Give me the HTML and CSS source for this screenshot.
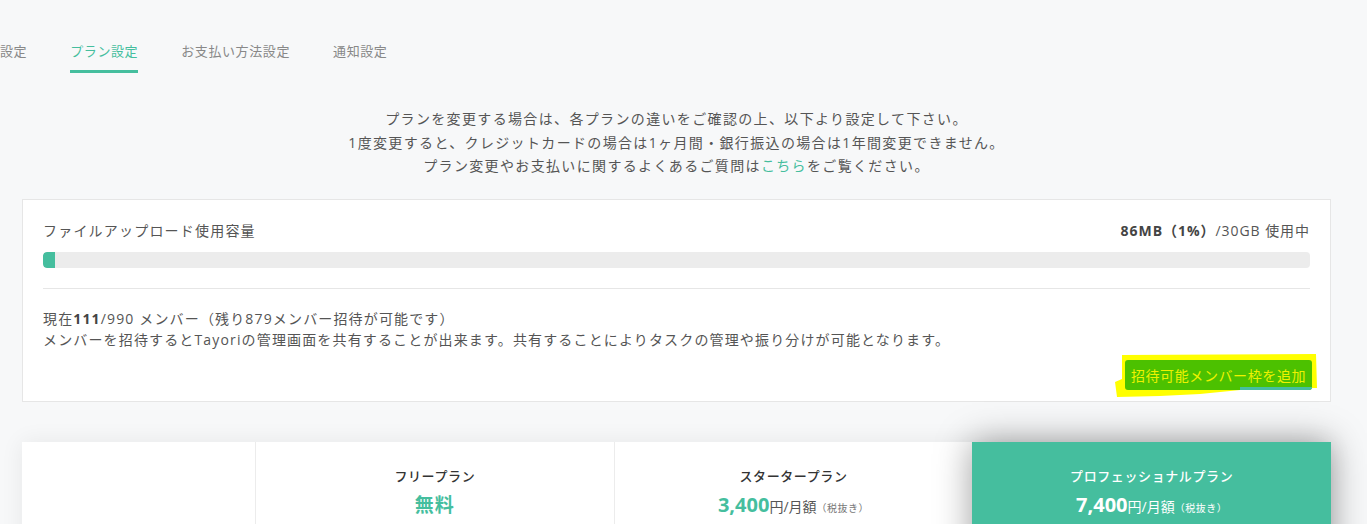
FILE: index.html
```html
<!DOCTYPE html>
<html lang="ja">
<head>
<meta charset="utf-8">
<title>プラン設定</title>
<link rel="stylesheet" href="styles.css">
</head>
<body>
<nav class="tabs">
  <a class="tab">設定</a>
  <a class="tab active">プラン設定</a>
  <a class="tab">お支払い方法設定</a>
  <a class="tab">通知設定</a>
</nav>
<main class="content">
  <p class="intro">プランを変更する場合は、各プランの違いをご確認の上、以下より設定して下さい。<br>1度変更すると、クレジットカードの場合は1ヶ月間・銀行振込の場合は1年間変更できません。<br>プラン変更やお支払いに関するよくあるご質問は<a class="link">こちら</a>をご覧ください。</p>

  <section class="card">
    <div class="usage-head">
      <span>ファイルアップロード使用容量</span>
      <span class="usage-value"><b>86MB（1%）</b>/30GB 使用中</span>
    </div>
    <div class="bar"><div class="fill" style="width:12px"></div></div>
    <div class="divider"></div>
    <p class="members">現在<b>111</b>/990 メンバー（残り879メンバー招待が可能です）<br>メンバーを招待するとTayoriの管理画面を共有することが出来ます。共有することによりタスクの管理や振り分けが可能となります。</p>
    <div class="actions">
      <span class="btn-wrap">
        <svg class="marker" width="204" height="48" viewBox="0 0 204 48"><polygon points="7,3 201,2 202,36 197,36 125,38 85,42 45,44 2,45 0,30 7,27" fill="#ffff00"/></svg>
        <button class="btn">招待可能メンバー枠を追加</button>
      </span>
    </div>
  </section>

  <section class="plans">
    <div class="plan-cell"></div>
    <div class="plan-cell">
      <div class="plan-name">フリープラン</div>
      <div class="price"><strong class="free">無料</strong></div>
    </div>
    <div class="plan-cell">
      <div class="plan-name">スタータープラン</div>
      <div class="price"><strong>3,400</strong>円/月額<small>（税抜き）</small></div>
    </div>
    <div class="plan-cell featured">
      <div class="plan-name">プロフェッショナルプラン</div>
      <div class="price"><strong>7,400</strong>円/月額<small>（税抜き）</small></div>
    </div>
  </section>
</main>
</body>
</html>
```

FILE: styles.css
```css
* { box-sizing: border-box; }
html, body { margin: 0; padding: 0; }
body {
  background: #f7f8f9;
  font-family: "Open Sans", "Noto Sans CJK JP", sans-serif;
  color: #555;
  font-size: 14px;
  overflow: hidden;
}
.tabs {
  display: flex;
  gap: 43px;
  height: 73px;
}
.tab {
  font-size: 13px;
  line-height: 20px;
  letter-spacing: 0.6px;
  color: #888;
  padding-top: 41px;
  padding-bottom: 9px;
  border-bottom: 3px solid transparent;
  cursor: pointer;
}
.tab.active {
  color: #45be9e;
  border-bottom-color: #45be9e;
}
.content {
  padding: 0 36px 0 22px;
}
.intro {
  margin: 34px 0 21px;
  text-align: center;
  font-size: 14px;
  line-height: 23.5px;
  letter-spacing: 1.35px;
  color: #555;
}
.link { color: #45be9e; cursor: pointer; }
.card {
  background: #fff;
  border: 1px solid #e6e6e6;
  padding: 21px 20px 11px;
}
.usage-head {
  display: flex;
  justify-content: space-between;
  line-height: 20px;
  letter-spacing: 1.2px;
}
.usage-head .usage-value { letter-spacing: 0.95px; }
.usage-head b { color: #444; }
.bar {
  margin-top: 11px;
  height: 16px;
  background: #ececec;
  border-radius: 4px;
  overflow: hidden;
}
.fill {
  height: 100%;
  background: #45be9e;
  border-radius: 4px 0 0 4px;
}
.divider {
  margin-top: 20px;
  border-top: 1px solid #e6e6e6;
}
.members {
  margin: 19px 0 0;
  line-height: 21px;
  letter-spacing: 1.15px;
}
.members b { color: #444; }
.actions {
  display: flex;
  justify-content: flex-end;
  margin-top: 10px;
  margin-right: -2px;
}
.btn-wrap {
  position: relative;
  display: inline-block;
}
.marker {
  position: absolute;
  left: -10px;
  top: -8px;
}
.btn {
  position: relative;
  display: block;
  width: 187px;
  height: 30px;
  border: 0;
  border-radius: 3px;
  background: #4cc100;
  color: #eef200;
  font-family: "Open Sans", "Noto Sans CJK JP", sans-serif;
  font-size: 14px;
  letter-spacing: 0.6px;
  padding: 0;
}
.btn::after {
  content: "";
  position: absolute;
  right: 0;
  bottom: 0;
  width: 72px;
  height: 3px;
  background: #45be9e;
  border-radius: 0 0 3px 0;
}
.plans {
  margin-top: 40px;
  display: grid;
  grid-template-columns: 233px 1fr 1fr 1fr;
  background: #fff;
  box-shadow: 0 0 22px rgba(0, 0, 0, 0.07);
  min-height: 200px;
}
.plan-cell {
  border-left: 1px solid #ececec;
  text-align: center;
  padding-top: 24px;
}
.plan-cell:first-child { border-left: 0; }
.plan-name {
  font-size: 13px;
  line-height: 20px;
  letter-spacing: 0.6px;
  color: #333;
  font-weight: 500;
}
.price {
  margin-top: 6px;
  line-height: 26px;
  font-size: 14px;
  color: #555;
}
.price strong {
  font-size: 20px;
  font-weight: 700;
  color: #45be9e;
}
.price strong.free { font-size: 19px; letter-spacing: 1px; }
.price small {
  font-size: 10px;
  letter-spacing: 0.5px;
  color: #777;
}
.featured {
  background: #45be9e;
  border-left: 0;
  position: relative;
  box-shadow: 0 0 34px rgba(0, 0, 0, 0.38);
}
.featured .plan-name,
.featured .price,
.featured .price strong,
.featured .price small { color: #fff; }
```
